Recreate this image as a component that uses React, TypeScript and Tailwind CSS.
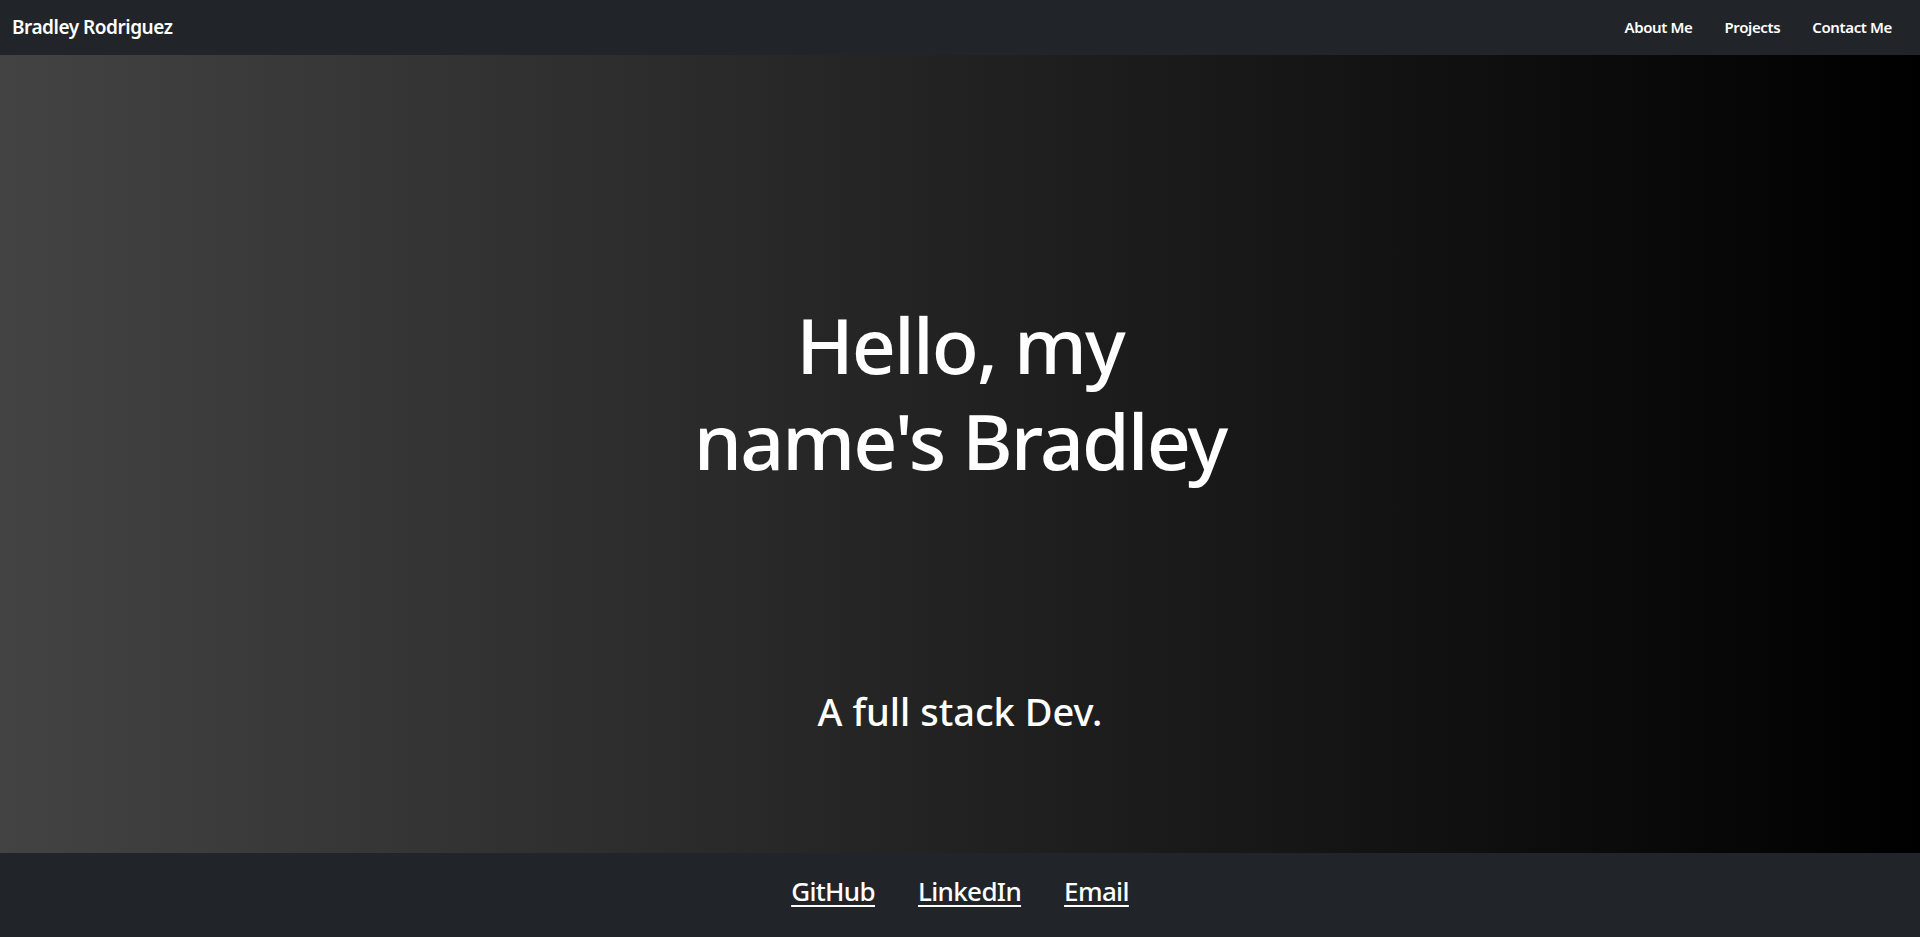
import React from 'react';

const font = { fontFamily: '"Noto Sans", "Open Sans", sans-serif' };

const navLinks = ['About Me', 'Projects', 'Contact Me'];
const footerLinks = ['GitHub', 'LinkedIn', 'Email'];

const App: React.FC = () => {
  return (
    <div className="flex flex-col h-screen text-white" style={font}>
      <nav className="h-[55px] shrink-0 bg-[#212529] flex items-center justify-between pl-3 pr-3">
        <a href="#" className="text-[19px] font-semibold tracking-tight">Bradley Rodriguez</a>
        <ul className="flex items-center">
          {navLinks.map((l) => (
            <li key={l}>
              <a href="#" className="block px-4 text-[15px] font-semibold tracking-tight">{l}</a>
            </li>
          ))}
        </ul>
      </nav>

      <main className="flex-1 flex flex-col items-center bg-[linear-gradient(to_right,#434343,#000000)]">
        <h1 className="mt-[242px] text-center text-[77px] leading-[96px] font-medium tracking-tight">
          Hello, my
          <br />
          name's Bradley
        </h1>
        <p className="mt-[200px] text-[38px] leading-[44px] font-medium">A full stack Dev.</p>
      </main>

      <footer className="h-[84px] shrink-0 bg-[#212529] flex items-center justify-center gap-[43px] pb-2">
        {footerLinks.map((l) => (
          <a key={l} href="#" className="text-[26px] font-medium underline underline-offset-4 tracking-tight">{l}</a>
        ))}
      </footer>
    </div>
  );
};

export default App;
